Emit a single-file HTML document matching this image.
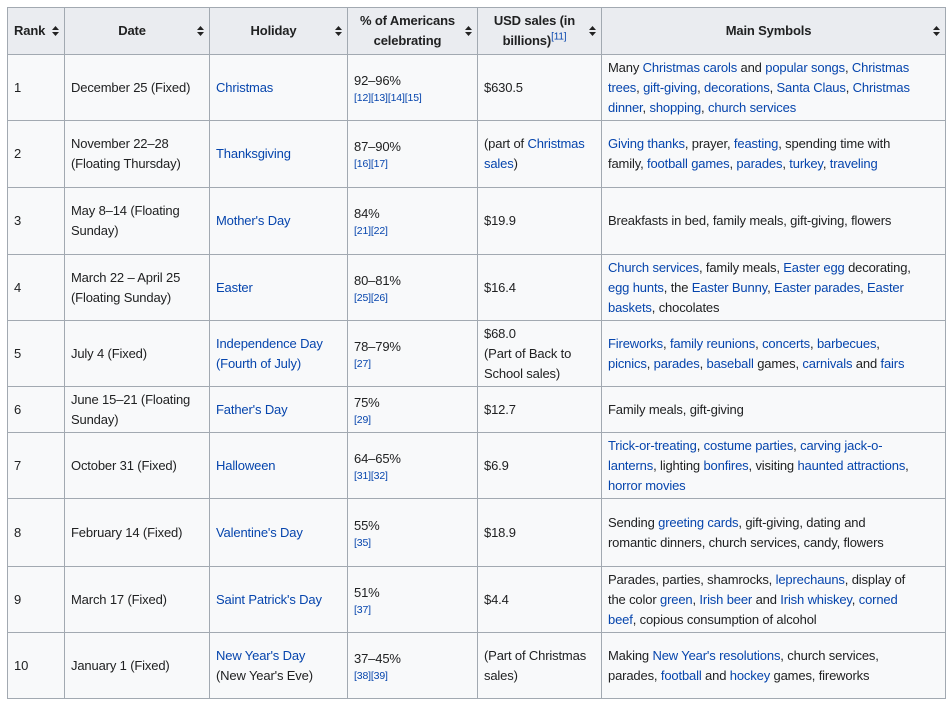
<!DOCTYPE html>
<html><head><meta charset="utf-8"><style>
body{margin:0;background:#fff;font-family:"Liberation Sans",sans-serif;font-size:13px;color:#202122}
table{position:absolute;left:7px;top:7px;border-collapse:collapse;table-layout:fixed;background:#f8f9fa}
td,th{border:1px solid #a2a9b1;padding:0 6px;line-height:20px;vertical-align:middle;text-align:left;letter-spacing:-0.15px}
td:last-child{white-space:nowrap}
th{background:#eaecf0;font-weight:bold;text-align:center;position:relative;padding-right:16px}
th svg{position:absolute;right:5px;top:50%;margin-top:-5px}
a{color:#0645ad;text-decoration:none}
.r{font-size:10.5px;line-height:14px;display:block}
sup{font-size:10px;line-height:0;font-weight:normal}
</style></head><body>
<table>
<colgroup><col style="width:57px"><col style="width:145px"><col style="width:138px"><col style="width:130px"><col style="width:124px"><col style="width:344px"></colgroup>
<tr style="height:47px">
<th style="text-align:left">Rank<svg width="7" height="10"><path d="M0 4L3.5 0 7 4Z M0 6L3.5 10 7 6Z" fill="#222"/></svg></th>
<th>Date<svg width="7" height="10"><path d="M0 4L3.5 0 7 4Z M0 6L3.5 10 7 6Z" fill="#222"/></svg></th>
<th>Holiday<svg width="7" height="10"><path d="M0 4L3.5 0 7 4Z M0 6L3.5 10 7 6Z" fill="#222"/></svg></th>
<th>% of Americans celebrating<svg width="7" height="10"><path d="M0 4L3.5 0 7 4Z M0 6L3.5 10 7 6Z" fill="#222"/></svg></th>
<th>USD sales (in billions)<sup><a>[11]</a></sup><svg width="7" height="10"><path d="M0 4L3.5 0 7 4Z M0 6L3.5 10 7 6Z" fill="#222"/></svg></th>
<th>Main Symbols<svg width="7" height="10"><path d="M0 4L3.5 0 7 4Z M0 6L3.5 10 7 6Z" fill="#222"/></svg></th>
</tr>
<tr style="height:66px"><td>1</td><td>December 25 (Fixed)</td><td><a>Christmas</a></td><td>92–96%<span class="r"><a>[12][13][14][15]</a></span></td><td>$630.5</td><td>Many <a>Christmas carols</a> and <a>popular songs</a>, <a>Christmas</a><br><a>trees</a>, <a>gift-giving</a>, <a>decorations</a>, <a>Santa Claus</a>, <a>Christmas</a><br><a>dinner</a>, <a>shopping</a>, <a>church services</a></td></tr>
<tr style="height:67px"><td>2</td><td>November 22–28 (Floating Thursday)</td><td><a>Thanksgiving</a></td><td>87–90%<span class="r"><a>[16][17]</a></span></td><td>(part of <a>Christmas sales</a>)</td><td><a>Giving thanks</a>, prayer, <a>feasting</a>, spending time with<br>family, <a>football games</a>, <a>parades</a>, <a>turkey</a>, <a>traveling</a></td></tr>
<tr style="height:67px"><td>3</td><td>May 8–14 (Floating Sunday)</td><td><a>Mother's Day</a></td><td>84%<span class="r"><a>[21][22]</a></span></td><td>$19.9</td><td>Breakfasts in bed, family meals, gift-giving, flowers</td></tr>
<tr style="height:66px"><td>4</td><td>March 22 – April 25 (Floating Sunday)</td><td><a>Easter</a></td><td>80–81%<span class="r"><a>[25][26]</a></span></td><td>$16.4</td><td><a>Church services</a>, family meals, <a>Easter egg</a> decorating,<br><a>egg hunts</a>, the <a>Easter Bunny</a>, <a>Easter parades</a>, <a>Easter</a><br><a>baskets</a>, chocolates</td></tr>
<tr style="height:66px"><td>5</td><td>July 4 (Fixed)</td><td><a>Independence Day (Fourth of July)</a></td><td>78–79%<span class="r"><a>[27]</a></span></td><td>$68.0<br>(Part of Back to School sales)</td><td><a>Fireworks</a>, <a>family reunions</a>, <a>concerts</a>, <a>barbecues</a>,<br><a>picnics</a>, <a>parades</a>, <a>baseball</a> games, <a>carnivals</a> and <a>fairs</a></td></tr>
<tr style="height:46px"><td>6</td><td>June 15–21 (Floating Sunday)</td><td><a>Father's Day</a></td><td>75%<span class="r"><a>[29]</a></span></td><td>$12.7</td><td>Family meals, gift-giving</td></tr>
<tr style="height:66px"><td>7</td><td>October 31 (Fixed)</td><td><a>Halloween</a></td><td>64–65%<span class="r"><a>[31][32]</a></span></td><td>$6.9</td><td><a>Trick-or-treating</a>, <a>costume parties</a>, <a>carving jack-o-</a><br><a>lanterns</a>, lighting <a>bonfires</a>, visiting <a>haunted attractions</a>,<br><a>horror movies</a></td></tr>
<tr style="height:68px"><td>8</td><td>February 14 (Fixed)</td><td><a>Valentine's Day</a></td><td>55%<span class="r"><a>[35]</a></span></td><td>$18.9</td><td>Sending <a>greeting cards</a>, gift-giving, dating and<br>romantic dinners, church services, candy, flowers</td></tr>
<tr style="height:66px"><td>9</td><td>March 17 (Fixed)</td><td><a>Saint Patrick's Day</a></td><td>51%<span class="r"><a>[37]</a></span></td><td>$4.4</td><td>Parades, parties, shamrocks, <a>leprechauns</a>, display of<br>the color <a>green</a>, <a>Irish beer</a> and <a>Irish whiskey</a>, <a>corned</a><br><a>beef</a>, copious consumption of alcohol</td></tr>
<tr style="height:66px"><td>10</td><td>January 1 (Fixed)</td><td><a>New Year's Day</a><br>(New Year's Eve)</td><td>37–45%<span class="r"><a>[38][39]</a></span></td><td>(Part of Christmas sales)</td><td>Making <a>New Year's resolutions</a>, church services,<br>parades, <a>football</a> and <a>hockey</a> games, fireworks</td></tr>
</table>
</body></html>
